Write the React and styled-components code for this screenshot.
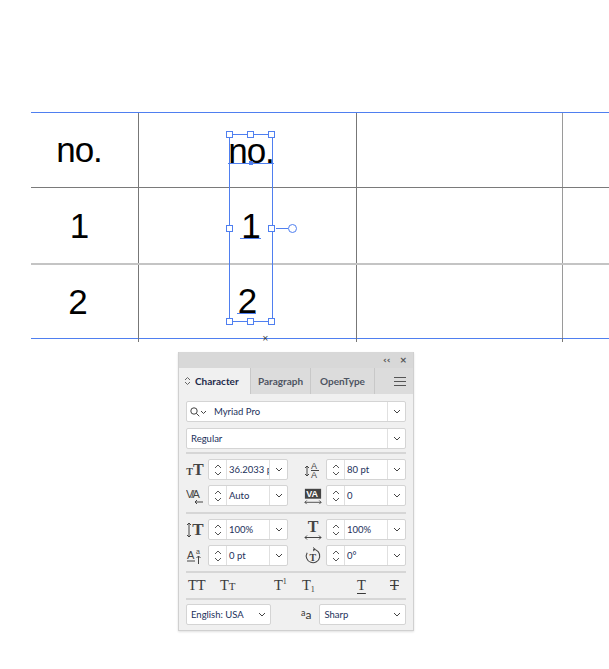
import React from "react";
import styled, { createGlobalStyle } from "styled-components";

const BLUE = "#4f7ff0";

const GlobalStyle = createGlobalStyle`
  body {
    margin: 0;
    background: #ffffff;
    font-family: Lato, "Noto Sans", sans-serif;
  }
`;

const Page = styled.div`
  width: 609px;
  height: 669px;
  overflow: hidden;
  padding-top: 112px;
  box-sizing: border-box;
`;

const Table = styled.div`
  position: relative;
  margin-left: 31px;
  border-top: 1px solid ${BLUE};
  border-bottom: 1px solid ${BLUE};
`;

const Row = styled.div`
  display: grid;
  grid-template-columns: 108px 218px 206px 1fr;
  height: ${(p) => p.h}px;
  box-sizing: border-box;
  border-top: ${(p) => (p.first ? "none" : `${p.light ? 2 : 1}px solid ${p.light ? "#c4c4c4" : "#7a7a7a"}`)};
`;

const Cell = styled.div`
  position: relative;
  display: flex;
  align-items: center;
  justify-content: center;
  padding-right: ${(p) => p.pr || 0}px;
  border-right: ${(p) => (p.last ? "none" : `1px solid ${p.soft ? "#9a9a9a" : "#777777"}`)};
  font-family: "Liberation Sans", Arial, sans-serif;
  font-size: 35px;
  letter-spacing: -1px;
  color: #000;
  &::after {
    content: "";
    display: ${(p) => (p.tail && !p.last ? "block" : "none")};
    position: absolute;
    right: -1px;
    bottom: -4px;
    width: 1px;
    height: 4px;
    background: #777;
  }
`;

/* selected text frame drawn over column 2 */
const Frame = styled.div`
  position: absolute;
  left: 198px;
  top: 21px;
  width: 44px;
  height: 188px;
  border: 1px solid ${BLUE};
  box-sizing: border-box;
`;

const FrameText = styled.div`
  margin-top: -1px;
  display: flex;
  flex-direction: column;
  align-items: center;
`;

const FrameLine = styled.div`
  height: 75px;
  flex: none;
  font-family: "Liberation Sans", Arial, sans-serif;
  font-size: 35px;
  letter-spacing: -1px;
  line-height: 34px;
  color: #000;
`;

const Glyphs = styled.span`
  position: relative;
  display: inline-block;
  margin-left: ${(p) => p.shift || 0}px;
  &::after {
    content: "";
    position: absolute;
    left: ${(p) => p.ul || 0}px;
    right: ${(p) => p.ur || 0}px;
    top: 29px;
    height: 1px;
    background: ${BLUE};
  }
`;

const BaseDot = styled.span`
  position: absolute;
  left: 50%;
  top: 27px;
  width: 4px;
  height: 4px;
  margin-left: -2px;
  background: ${BLUE};
`;

const Handle = styled.span`
  position: absolute;
  width: 5px;
  height: 5px;
  background: #fff;
  border: 1px solid ${BLUE};
  left: ${(p) => p.x}px;
  top: ${(p) => p.y}px;
`;

const Port = styled.span`
  position: absolute;
  left: 46px;
  top: 93px;
  width: 12px;
  height: 1px;
  background: ${BLUE};
  &::after {
    content: "";
    position: absolute;
    left: 12px;
    top: -4px;
    width: 7px;
    height: 7px;
    border: 1px solid ${BLUE};
    border-radius: 50%;
    background: #fff;
  }
`;

const Cross = styled.span`
  position: absolute;
  left: 231px;
  bottom: -5px;
  font-size: 8px;
  line-height: 8px;
  color: #333;
  font-family: "DejaVu Sans", sans-serif;
`;

/* ---------- character panel ---------- */

const Panel = styled.div`
  margin: 13px 0 0 178px;
  width: 234px;
  background: #f0f0f0;
  border: 1px solid #d0d0d0;
  border-top: none;
  box-shadow: 0 1px 2px rgba(0, 0, 0, 0.12);
  font-size: 9.5px;
  color: #22305a;
`;

const TitleBar = styled.div`
  height: 16px;
  background: #d8d8d8;
  display: flex;
  align-items: center;
  justify-content: flex-end;
  gap: 9px;
  padding-right: 6px;
  color: #555;
  font-size: 9px;
  font-weight: 700;
  font-family: "DejaVu Sans", sans-serif;
`;

const Tabs = styled.div`
  display: flex;
  height: 26px;
  background: #dcdcdc;
`;

const Tab = styled.div`
  display: flex;
  align-items: center;
  justify-content: ${(p) => (p.active ? "flex-start" : "center")};
  gap: 4px;
  padding-left: ${(p) => (p.active ? 5 : 0)}px;
  width: ${(p) => p.w}px;
  box-sizing: border-box;
  background: ${(p) => (p.active ? "#f0f0f0" : "#dcdcdc")};
  border-right: 1px solid #c8c8c8;
  font-weight: 700;
  color: ${(p) => (p.active ? "#1e2a4a" : "#4e5462")};
  font-size: 10px;
`;

const MenuBtn = styled.div`
  flex: 1;
  display: flex;
  align-items: center;
  justify-content: flex-end;
  padding-right: 7px;
`;

const Body = styled.div`
  padding: 7px 7px 5px 7px;
  display: flex;
  flex-direction: column;
`;

const Select = styled.div`
  display: flex;
  align-items: center;
  height: 21px;
  width: ${(p) => (p.w ? `${p.w}px` : "auto")};
  background: #fff;
  border: 1px solid #d4d4d4;
  border-radius: 2px;
  box-sizing: border-box;
  margin-bottom: ${(p) => p.mb || 0}px;
`;

const SelectText = styled.span`
  flex: 1;
  padding-left: ${(p) => p.pl || 4}px;
  white-space: nowrap;
  overflow: hidden;
`;

const Chev = styled.span`
  width: 17px;
  align-self: stretch;
  display: flex;
  align-items: center;
  justify-content: center;
  border-left: ${(p) => (p.plain ? "none" : "1px solid #e0e0e0")};
`;

const Sep = styled.div`
  height: 2px;
  background: #d6d6d6;
  margin: ${(p) => p.m || "5px 0"};
`;

const Grid = styled.div`
  display: grid;
  grid-template-columns: 102px 102px;
  column-gap: 16px;
  row-gap: 5px;
`;

const Field = styled.div`
  display: flex;
  align-items: center;
  gap: 4px;
`;

const Ico = styled.span`
  width: 18px;
  height: 20px;
  display: flex;
  align-items: center;
  justify-content: center;
  flex: none;
  color: #444;
`;

const Spinner = styled.div`
  flex: 1;
  min-width: 0;
  display: flex;
  align-items: center;
  height: 21px;
  background: #fff;
  border: 1px solid #d4d4d4;
  border-radius: 2px;
  box-sizing: border-box;
`;

const Steps = styled.span`
  width: 17px;
  flex: none;
  align-self: stretch;
  display: flex;
  align-items: center;
  justify-content: center;
  border-right: 1px solid #e0e0e0;
`;

const Value = styled.span`
  flex: 1;
  min-width: 0;
  padding-left: 2px;
  white-space: pre;
  overflow: hidden;
  text-overflow: clip;
`;

const StyleRow = styled.div`
  display: flex;
  align-items: center;
  height: 20px;
  padding-left: 2px;
  font-family: "Liberation Serif", "DejaVu Serif", serif;
  font-size: 14.5px;
  color: #3a3a3a;
`;

const StyleBtn = styled.span`
  width: ${(p) => p.w}px;
  flex: none;
  text-decoration: ${(p) => p.deco || "none"};
  text-underline-offset: 3px;
  text-decoration-thickness: 1px;
  sup, sub {
    font-size: 8px;
  }
  sup {
    vertical-align: 6px;
  }
  sub {
    vertical-align: -2px;
  }
`;

const SmallCap = styled.span`
  font-size: 11px;
`;

const BottomRow = styled.div`
  display: flex;
  align-items: center;
`;

const AaIcon = styled.span`
  margin: 0 8px 0 30px;
  font-size: 12px;
  color: #333;
  sup {
    font-size: 9px;
    vertical-align: 3px;
  }
`;

const Serif = styled.span`
  font-family: "Liberation Serif", "DejaVu Serif", serif;
  font-weight: 700;
  color: #444;
  line-height: 1;
  font-size: ${(p) => p.size}px;
`;

const ChevronDown = () => (
  <svg width="8" height="5" viewBox="0 0 8 5">
    <path d="M1 1l3 3 3-3" fill="none" stroke="#444" strokeWidth="1" />
  </svg>
);

const UpDown = () => (
  <svg width="8" height="14" viewBox="0 0 8 14">
    <path d="M1 5l3-3 3 3M1 9l3 3 3-3" fill="none" stroke="#555" strokeWidth="1" />
  </svg>
);

const SizeIcon = () => (
  <span>
    <Serif size={10}>T</Serif>
    <Serif size={16}>T</Serif>
  </span>
);

const LeadingIcon = () => (
  <svg width="18" height="20" viewBox="0 0 18 20">
    <path d="M3 6v10M1 8l2-2 2 2M1 14l2 2 2-2" fill="none" stroke="#444" strokeWidth="1" />
    <text x="7" y="9" fontSize="9" fontFamily="Liberation Sans" fill="#444">A</text>
    <path d="M7 10.5h8" stroke="#444" />
    <text x="7" y="18" fontSize="9" fontFamily="Liberation Sans" fill="#444">A</text>
  </svg>
);

const KernIcon = () => (
  <svg width="18" height="20" viewBox="0 0 18 20">
    <text x="0" y="12" fontSize="11" fontFamily="Liberation Sans" letterSpacing="-2" fill="#444">V/A</text>
    <path d="M9 16h8M9 16l2-2M9 16l2 2" fill="none" stroke="#444" />
  </svg>
);

const TrackIcon = () => (
  <svg width="20" height="20" viewBox="0 0 20 20">
    <rect x="1" y="2" width="18" height="11" fill="#444" />
    <text x="2.5" y="11.5" fontSize="10" fontWeight="700" fontFamily="Liberation Sans" fill="#fff">VA</text>
    <path d="M1 17h18M1 17l2-2M1 17l2 2M19 17l-2-2M19 17l-2 2" fill="none" stroke="#444" />
  </svg>
);

const VScaleIcon = () => (
  <span style={{ display: "flex", alignItems: "center" }}>
    <svg width="6" height="16" viewBox="0 0 6 16">
      <path d="M3 1v14M1 3l2-2 2 2M1 13l2 2 2-2" fill="none" stroke="#444" />
    </svg>
    <Serif size={17}>T</Serif>
  </span>
);

const HScaleIcon = () => (
  <span style={{ display: "flex", flexDirection: "column", alignItems: "center" }}>
    <Serif size={16}>T</Serif>
    <svg width="18" height="5" viewBox="0 0 18 5">
      <path d="M1 2.5h16M1 2.5l2-2M1 2.5l2 2M17 2.5l-2-2M17 2.5l-2 2" fill="none" stroke="#444" />
    </svg>
  </span>
);

const ShiftIcon = () => (
  <svg width="18" height="20" viewBox="0 0 18 20">
    <text x="1" y="13" fontSize="11" fontFamily="Liberation Sans" fill="#444">A</text>
    <text x="10" y="8" fontSize="7" fontFamily="Liberation Sans" fill="#444">a</text>
    <path d="M1 15h8" stroke="#444" />
    <path d="M12.5 18v-8M10.5 12l2-2 2 2" fill="none" stroke="#444" />
  </svg>
);

const RotateIcon = () => (
  <svg width="20" height="20" viewBox="0 0 20 20">
    <path d="M10 2.5a7.5 7.5 0 1 1 -6.5 3.8" fill="none" stroke="#444" strokeWidth="1.2" />
    <path d="M10 0.5l2.5 2-2.5 2" fill="none" stroke="#444" />
    <text x="6" y="15" fontSize="11" fontWeight="700" fontFamily="Liberation Serif" fill="#444">T</text>
  </svg>
);

const SearchIcon = () => (
  <svg width="18" height="10" viewBox="0 0 18 10">
    <circle cx="4" cy="4" r="3.2" fill="none" stroke="#444" />
    <path d="M6.3 6.3l3 3" stroke="#444" />
    <path d="M11 4l2.5 2.5 2.5-2.5" fill="none" stroke="#444" />
  </svg>
);

const Hamburger = () => (
  <svg width="12" height="9" viewBox="0 0 12 9">
    <path d="M0 0.5h12M0 4.5h12M0 8.5h12" stroke="#555" />
  </svg>
);

const UpDownSmall = () => (
  <svg width="7" height="10" viewBox="0 0 7 10">
    <path d="M1 4l2.5-2.5L6 4M1 6l2.5 2.5L6 6" fill="none" stroke="#666" />
  </svg>
);

const SpinField = ({ icon, value }) => (
  <Field>
    <Ico>{icon}</Ico>
    <Spinner>
      <Steps>
        <UpDown />
      </Steps>
      <Value>{value}</Value>
      <Chev>
        <ChevronDown />
      </Chev>
    </Spinner>
  </Field>
);

export default function App() {
  return (
    <Page>
      <GlobalStyle />
      <Table>
        <Row first h={74}>
          <Cell pr={11}>no.</Cell>
          <Cell />
          <Cell soft />
          <Cell last />
        </Row>
        <Row h={76}>
          <Cell pr={11}>1</Cell>
          <Cell />
          <Cell soft />
          <Cell last />
        </Row>
        <Row light h={75}>
          <Cell pr={14} tail>2</Cell>
          <Cell tail />
          <Cell soft tail />
          <Cell last />
        </Row>

        <Frame>
          <FrameText>
            <FrameLine>
              <Glyphs>
                no.
                <BaseDot />
              </Glyphs>
            </FrameLine>
            <FrameLine>
              <Glyphs shift={-1} ul={-1} ur={-1}>1</Glyphs>
            </FrameLine>
            <FrameLine>
              <Glyphs shift={-8} ul={-1} ur={0}>2</Glyphs>
            </FrameLine>
          </FrameText>
          <Handle x={-4} y={-4} />
          <Handle x={17} y={-4} />
          <Handle x={38} y={-4} />
          <Handle x={-4} y={90} />
          <Handle x={38} y={90} />
          <Handle x={-4} y={183} />
          <Handle x={17} y={183} />
          <Handle x={38} y={183} />
          <Port />
        </Frame>
        <Cross>×</Cross>
      </Table>

      <Panel>
        <TitleBar>
          <span>‹‹</span>
          <span>×</span>
        </TitleBar>
        <Tabs>
          <Tab active w={72}>
            <UpDownSmall />
            Character
          </Tab>
          <Tab w={60}>Paragraph</Tab>
          <Tab w={64}>OpenType</Tab>
          <MenuBtn>
            <Hamburger />
          </MenuBtn>
        </Tabs>
        <Body>
          <Select mb={6}>
            <span style={{ paddingLeft: 3, display: "flex" }}>
              <SearchIcon />
            </span>
            <SelectText pl={6}>Myriad Pro</SelectText>
            <Chev>
              <ChevronDown />
            </Chev>
          </Select>
          <Select>
            <SelectText>Regular</SelectText>
            <Chev>
              <ChevronDown />
            </Chev>
          </Select>
          <Sep m="3px 0 5px" />
          <Grid>
            <SpinField icon={<SizeIcon />} value="36.2033 pt" />
            <SpinField icon={<LeadingIcon />} value="80 pt" />
            <SpinField icon={<KernIcon />} value="Auto" />
            <SpinField icon={<TrackIcon />} value="0" />
          </Grid>
          <Sep m="6px 0 5px" />
          <Grid>
            <SpinField icon={<VScaleIcon />} value="100%" />
            <SpinField icon={<HScaleIcon />} value="100%" />
            <SpinField icon={<ShiftIcon />} value="0 pt" />
            <SpinField icon={<RotateIcon />} value="0°" />
          </Grid>
          <Sep m="5px 0 2px" />
          <StyleRow>
            <StyleBtn w={32}>TT</StyleBtn>
            <StyleBtn w={54}>
              T<SmallCap>T</SmallCap>
            </StyleBtn>
            <StyleBtn w={28}>
              T<sup>1</sup>
            </StyleBtn>
            <StyleBtn w={55}>
              T<sub>1</sub>
            </StyleBtn>
            <StyleBtn w={33} deco="underline">
              T
            </StyleBtn>
            <StyleBtn w={12} deco="line-through">
              T
            </StyleBtn>
          </StyleRow>
          <Sep m="3px 0 4px" />
          <BottomRow>
            <Select w={85}>
              <SelectText>English: USA</SelectText>
              <Chev plain>
                <ChevronDown />
              </Chev>
            </Select>
            <AaIcon>
              <sup>a</sup>a
            </AaIcon>
            <Select style={{ flex: 1 }}>
              <SelectText>Sharp</SelectText>
              <Chev plain>
                <ChevronDown />
              </Chev>
            </Select>
          </BottomRow>
        </Body>
      </Panel>
    </Page>
  );
}
